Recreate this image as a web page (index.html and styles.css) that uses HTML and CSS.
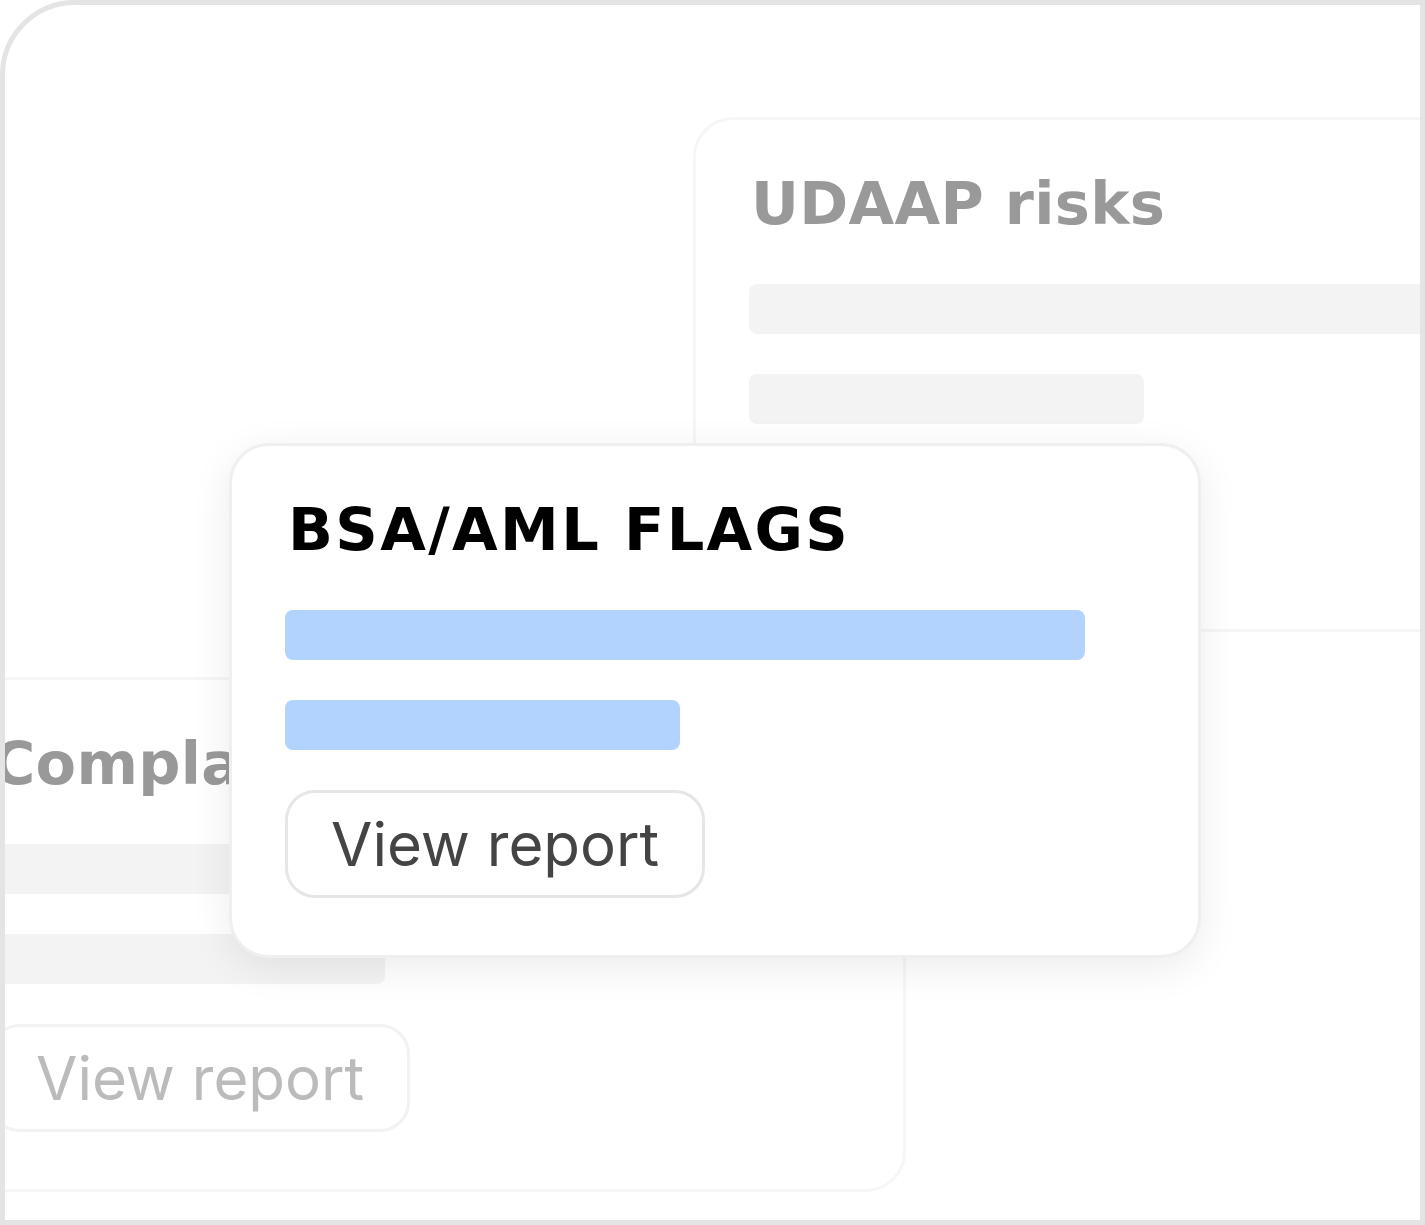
FILE: index.html
```html
<!DOCTYPE html>
<html>
<head>
<meta charset="utf-8">
<link rel="stylesheet" href="styles.css">
</head>
<body>
<div class="frame">
  <section class="card card-faded card-udaap">
    <h2 class="card-title">UDAAP risks</h2>
    <div class="bar bar-long"></div>
    <div class="bar bar-short"></div>
    <div class="btn">View report</div>
  </section>
  <section class="card card-faded card-complaints">
    <h2 class="card-title">Complaints</h2>
    <div class="bar bar-long"></div>
    <div class="bar bar-short"></div>
    <div class="btn">View report</div>
  </section>
  <section class="card card-main">
    <h2 class="card-title">BSA/AML FLAGS</h2>
    <div class="bar bar-long"></div>
    <div class="bar bar-short"></div>
    <div class="btn">View report</div>
  </section>
</div>
</body>
</html>
```

FILE: styles.css
```css
html, body {
  margin: 0;
  padding: 0;
  background: #ffffff;
}

.frame {
  position: relative;
  width: 1425px;
  height: 1225px;
  box-sizing: border-box;
  border: 5px solid #e4e4e4;
  border-top-left-radius: 75px;
  overflow: hidden;
  background: #ffffff;
}

.card {
  position: absolute;
  width: 972px;
  height: 515px;
  box-sizing: border-box;
  border: 3px solid #f6f6f6;
  border-radius: 40px;
  background: #ffffff;
  padding: 54px 53px 0 53px;
  display: flex;
  flex-direction: column;
  align-items: flex-start;
  gap: 40px;
}

.card-udaap {
  left: 688px;
  top: 112px;
}

.card-complaints {
  left: -71px;
  top: 672px;
}

.card-main {
  left: 224px;
  top: 438px;
  border-color: #efefef;
  box-shadow: 0 10px 40px rgba(0, 0, 0, 0.08);
  z-index: 2;
}

.card-title {
  margin: 0 0 11px 2px;
  font-family: "DejaVu Sans", "Liberation Sans", sans-serif;
  font-weight: 700;
  font-size: 59px;
  line-height: 59px;
  color: #000000;
  white-space: nowrap;
}

.card-main .card-title {
  margin-left: 3px;
  letter-spacing: 2.35px;
}

.card-faded .card-title {
  color: #999999;
  letter-spacing: 0.3px;
}

.bar {
  height: 50px;
  border-radius: 8px;
  background: #b1d3fd;
  flex: none;
}

.bar-long {
  width: 800px;
}

.bar-short {
  width: 395px;
}

.card-faded .bar {
  background: #f3f3f3;
}

.btn {
  display: inline-flex;
  align-items: center;
  height: 108px;
  box-sizing: border-box;
  padding: 0 43px;
  border: 3px solid #e6e6e6;
  border-radius: 30px;
  font-family: "Inter", "Liberation Sans", sans-serif;
  font-size: 60px;
  font-weight: 400;
  color: #444444;
  white-space: nowrap;
  flex: none;
}

.card-faded .btn {
  color: #bbbbbb;
  border-color: #f2f2f2;
}
```
